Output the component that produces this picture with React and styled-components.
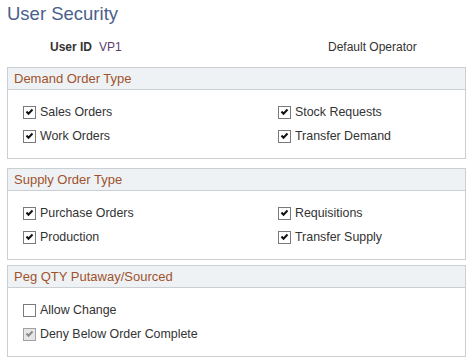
import React from 'react';
import styled, { createGlobalStyle } from 'styled-components';

const Global = createGlobalStyle`
  body {
    margin: 0;
    background: #fff;
    font-family: "Liberation Sans", Arial, sans-serif;
  }
`;

const Page = styled.div`
  width: 474px;
  padding: 0 8px 0 7px;
  box-sizing: border-box;
`;

const Title = styled.h1`
  margin: 0;
  padding-top: 3px;
  font-size: 18.5px;
  font-weight: normal;
  color: #4a5f8c;
  line-height: 22px;
`;

const UserRow = styled.div`
  display: flex;
  align-items: baseline;
  height: 20px;
  margin-top: 15px;
  font-size: 12px;
  color: #333;
`;

const FieldLabel = styled.span`
  font-weight: bold;
  margin-left: 43px;
  width: 49px;
`;

const FieldValue = styled.span`
  color: #5a3d6e;
  width: 229px;
`;

const Description = styled.span`
  color: #333;
`;

const Box = styled.section`
  border: 1px solid #cbcfd4;
  margin-top: ${p => p.$top}px;
`;

const BoxHeader = styled.div`
  height: 21px;
  line-height: 21px;
  background: #eef2f4;
  border-bottom: 1px solid #cbcfd4;
  padding-left: 6px;
  font-size: 13px;
  color: #a0522d;
`;

const BoxBody = styled.div`
  display: grid;
  grid-template-columns: 255px 1fr;
  row-gap: 6px;
  padding: 13px 0 13px 15px;
`;

const Item = styled.label`
  display: flex;
  align-items: center;
  height: 18px;
  font-size: 12.4px;
  color: #333;
`;

const Box13 = styled.span`
  width: 11px;
  height: 11px;
  border: 1px solid ${p => (p.$disabled ? '#a0a0a0' : '#7a7a7a')};
  background: ${p => (p.$disabled ? '#e6e6e6' : '#fff')};
  margin-right: 4px;
  display: inline-flex;
  align-items: center;
  justify-content: center;
  flex-shrink: 0;
`;

function Check({ checked, disabled }) {
  return (
    <Box13 $disabled={disabled}>
      {checked && (
        <svg width="9" height="9" viewBox="0 0 9 9">
          <path
            d="M1.5 3.5 L3.5 5.8 L7.5 1.5"
            fill="none"
            stroke={disabled ? '#8c8c8c' : '#111'}
            strokeWidth="2"
          />
        </svg>
      )}
    </Box13>
  );
}

const sections = [
  {
    title: 'Demand Order Type',
    top: 7,
    items: [
      { label: 'Sales Orders', checked: true },
      { label: 'Stock Requests', checked: true },
      { label: 'Work Orders', checked: true },
      { label: 'Transfer Demand', checked: true },
    ],
  },
  {
    title: 'Supply Order Type',
    top: 9,
    items: [
      { label: 'Purchase Orders', checked: true },
      { label: 'Requisitions', checked: true },
      { label: 'Production', checked: true },
      { label: 'Transfer Supply', checked: true },
    ],
  },
  {
    title: 'Peg QTY Putaway/Sourced',
    top: 5,
    items: [
      { label: 'Allow Change', checked: false },
      null,
      { label: 'Deny Below Order Complete', checked: true, disabled: true },
    ],
  },
];

export default function App() {
  return (
    <Page>
      <Global />
      <Title>User Security</Title>
      <UserRow>
        <FieldLabel>User ID</FieldLabel>
        <FieldValue>VP1</FieldValue>
        <Description>Default Operator</Description>
      </UserRow>
      {sections.map((s, i) => (
        <Box key={i} $top={s.top}>
          <BoxHeader>{s.title}</BoxHeader>
          <BoxBody>
            {s.items.map((it, j) =>
              it ? (
                <Item key={j}>
                  <Check checked={it.checked} disabled={it.disabled} />
                  {it.label}
                </Item>
              ) : (
                <span key={j} />
              )
            )}
          </BoxBody>
        </Box>
      ))}
    </Page>
  );
}
